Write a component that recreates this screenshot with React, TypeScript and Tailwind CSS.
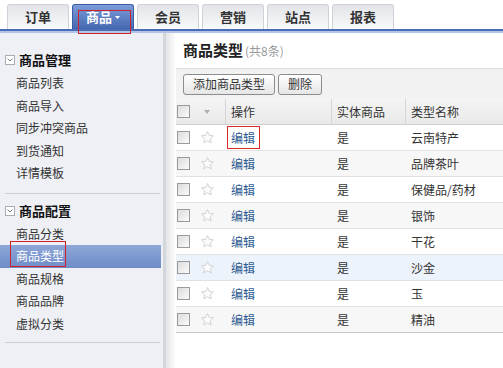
import React from 'react';

const font = { fontFamily: '"Noto Sans CJK SC", "Noto Sans", sans-serif' };

const tabs = ['订单', '商品', '会员', '营销', '站点', '报表'];

const groups = [
  { title: '商品管理', items: ['商品列表', '商品导入', '同步冲突商品', '到货通知', '详情模板'] },
  { title: '商品配置', items: ['商品分类', '商品类型', '商品规格', '商品品牌', '虚拟分类'] },
];

const rows = ['云南特产', '品牌茶叶', '保健品/药材', '银饰', '干花', '沙金', '玉', '精油'];

function Checkbox() {
  return (
    <div className="w-[13px] h-[13px] border border-[#9a9a9a] bg-gradient-to-br from-[#dcdcdc] to-[#fbfbfb] shrink-0" />
  );
}

function Star() {
  return (
    <svg width="15" height="15" viewBox="0 0 24 24" className="shrink-0">
      <path
        d="M12 2.5l2.9 6.1 6.6.8-4.9 4.6 1.3 6.6L12 17.3l-5.9 3.3 1.3-6.6-4.9-4.6 6.6-.8z"
        fill="#fbfbfb"
        stroke="#cfcfcf"
        strokeWidth="1.5"
        strokeLinejoin="round"
      />
    </svg>
  );
}

function CollapseIcon() {
  return (
    <div className="w-[10px] h-[10px] border border-[#a8acb4] bg-white flex items-center justify-center shrink-0">
      <svg width="6" height="4" viewBox="0 0 6 4">
        <path d="M0.5 0.5L3 3L5.5 0.5" fill="none" stroke="#7a7f88" strokeWidth="1" />
      </svg>
    </div>
  );
}

export default function App() {
  return (
    <div className="w-[503px] h-[368px] overflow-hidden bg-white text-[#333] text-[12px]" style={font}>
      {/* Top tabs */}
      <div className="h-[29px] flex items-end pl-[7px] gap-[3px] bg-white">
        {tabs.map((t) =>
          t === '商品' ? (
            <div
              key={t}
              className="relative w-[62px] h-[25px] rounded-t-[3px] bg-gradient-to-b from-[#7d9cd8] to-[#4467b0] border border-[#3c5ea6] border-b-0 flex items-center justify-center gap-[3px] text-white font-bold text-[13px]"
            >
              <span>{t}</span>
              <svg width="5" height="3" viewBox="0 0 5 3">
                <path d="M0 0H5L2.5 3z" fill="#fff" />
              </svg>
              <div className="absolute left-[5px] top-[5px] w-[53px] h-[24px] border border-[#d0222a]" />
            </div>
          ) : (
            <div
              key={t}
              className="w-[62px] h-[25px] rounded-t-[3px] bg-gradient-to-b from-[#e2e4e8] to-[#f8f9fa] border border-[#cfd2d8] border-b-0 flex items-center justify-center text-[#333] font-bold text-[13px]"
            >
              {t}
            </div>
          )
        )}
      </div>
      <div className="h-[2px] bg-[#4a6db5]" />
      <div className="h-[2px] bg-[#b3c5e6]" />

      <div className="flex h-[335px]">
        {/* Sidebar */}
        <div className="w-[163px] bg-[#eef0f5] shrink-0 pt-[15px]">
          {groups.map((g, gi) => (
            <div key={g.title}>
              <div className="h-[24px] flex items-center gap-[4px] pl-[5px] font-bold text-[13px] text-[#111]">
                <CollapseIcon />
                <span>{g.title}</span>
              </div>
              {g.items.map((it) =>
                it === '商品类型' ? (
                  <div
                    key={it}
                    className="relative h-[22.5px] w-[161px] pl-[16px] flex items-center text-white bg-gradient-to-b from-[#8ea7d8] to-[#6f8cc8]"
                  >
                    {it}
                    <div className="absolute left-[10px] top-[-4px] w-[56px] h-[26px] border border-[#d0222a]" />
                  </div>
                ) : (
                  <div key={it} className="h-[22.5px] pl-[16px] flex items-center text-[#333]">
                    {it}
                  </div>
                )
              )}
              <div className={`${gi === 0 ? 'mt-[8px] mb-[5px]' : 'mt-[7px]'} mx-[5px] w-[155px] h-px bg-[#c9ced8]`} />
            </div>
          ))}
        </div>

        {/* Content */}
        <div className="flex-1 flex bg-white">
          <div className="w-[13px] shrink-0 border-l-[3px] border-[#d3d6db] bg-gradient-to-r from-[#e4e5e7] to-white" />
          <div className="flex-1 flex flex-col">
            <div className="h-[35px] flex items-center pl-[7px] gap-[2px]">
              <span className="text-[15px] font-bold text-[#222]">商品类型</span>
              <span className="text-[12px] text-[#999]">(共8条)</span>
            </div>
            <div className="h-[31px] bg-[#f2f2f2] border-t border-[#dedede] flex items-center pl-[7px] gap-[3px]">
              <button className="h-[21px] px-[9px] rounded-[3px] border border-[#8c8c8c] bg-gradient-to-b from-white to-[#e6e6e6] text-[12px] text-[#333]">
                添加商品类型
              </button>
              <button className="h-[21px] px-[9px] rounded-[3px] border border-[#8c8c8c] bg-gradient-to-b from-white to-[#e6e6e6] text-[12px] text-[#333]">
                删除
              </button>
            </div>

            {/* Header row */}
            <div className="h-[26px] flex items-center bg-gradient-to-b from-[#f4f4f4] to-[#e9e9e9] border-b border-[#cfcfcf]">
              <div className="w-[22px] pl-[1px] flex items-center">
                <Checkbox />
              </div>
              <div className="w-[27px] pl-[6px] flex items-center">
                <svg width="6" height="4" viewBox="0 0 6 4">
                  <path d="M0 0H6L3 4z" fill="#b0b0b0" />
                </svg>
              </div>
              <div className="w-[106px] h-full border-l border-[#d6d6d6] pl-[5px] flex items-center">操作</div>
              <div className="w-[74px] h-full border-l border-[#d6d6d6] pl-[5px] flex items-center">实体商品</div>
              <div className="flex-1 h-full border-l border-[#d6d6d6] pl-[5px] flex items-center">类型名称</div>
            </div>

            {rows.map((r, i) => (
              <div
                key={r}
                className={`h-[26px] flex items-center border-b ${
                  i === 7 ? 'border-[#c9c9c9]' : 'border-[#e2e2e2]'
                } ${i === 5 ? 'bg-[#edf3fa]' : i % 2 === 1 ? 'bg-[#f7f7f7]' : 'bg-white'}`}
              >
                <div className="w-[22px] pl-[1px] flex items-center">
                  <Checkbox />
                </div>
                <div className="w-[27px] pl-[2px] flex items-center">
                  <Star />
                </div>
                <div className="w-[106px] pl-[6px] text-[#2d5b92] relative">
                  <span className="relative inline-block">
                    编辑
                    {i === 0 && (
                      <span className="absolute left-[-4px] right-[-5px] top-[-3px] bottom-[-2px] border border-[#d42a2a] z-10" />
                    )}
                  </span>
                </div>
                <div className="w-[74px] pl-[6px]">是</div>
                <div className="flex-1 pl-[6px]">{r}</div>
              </div>
            ))}
          </div>
        </div>
      </div>
    </div>
  );
}
